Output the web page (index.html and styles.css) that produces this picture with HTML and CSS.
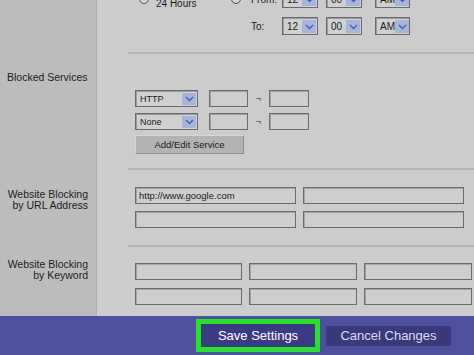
FILE: index.html
```html
<!DOCTYPE html>
<html>
<head>
<meta charset="utf-8">
<link rel="stylesheet" href="styles.css">
</head>
<body>
<div class="page">
  <section class="sec sec-time">
    <div class="lbl"></div>
    <div class="body">
      <div class="time-grid">
        <span class="radio"></span>
        <span class="t24">24 Hours</span>
        <span class="radio"></span>
        <span class="tlbl">From:</span>
        <span class="sel s12"><span class="v">12</span><span class="arr"><svg width="9" height="6" viewBox="0 0 9 6"><path d="M1 1 L4.5 4.5 L8 1" fill="none" stroke="#4562b2" stroke-width="1.4"/></svg></span></span>
        <span class="sel s00"><span class="v">00</span><span class="arr"><svg width="9" height="6" viewBox="0 0 9 6"><path d="M1 1 L4.5 4.5 L8 1" fill="none" stroke="#4562b2" stroke-width="1.4"/></svg></span></span>
        <span class="sel sam"><span class="v">AM</span><span class="arr"><svg width="9" height="6" viewBox="0 0 9 6"><path d="M1 1 L4.5 4.5 L8 1" fill="none" stroke="#4562b2" stroke-width="1.4"/></svg></span></span>
        <span></span><span></span><span></span>
        <span class="tlbl">To:</span>
        <span class="sel s12"><span class="v">12</span><span class="arr"><svg width="9" height="6" viewBox="0 0 9 6"><path d="M1 1 L4.5 4.5 L8 1" fill="none" stroke="#4562b2" stroke-width="1.4"/></svg></span></span>
        <span class="sel s00"><span class="v">00</span><span class="arr"><svg width="9" height="6" viewBox="0 0 9 6"><path d="M1 1 L4.5 4.5 L8 1" fill="none" stroke="#4562b2" stroke-width="1.4"/></svg></span></span>
        <span class="sel sam"><span class="v">AM</span><span class="arr"><svg width="9" height="6" viewBox="0 0 9 6"><path d="M1 1 L4.5 4.5 L8 1" fill="none" stroke="#4562b2" stroke-width="1.4"/></svg></span></span>
      </div>
      <div class="sep"></div>
    </div>
  </section>

  <section class="sec sec-blocked">
    <div class="lbl lbl-blocked">Blocked Services</div>
    <div class="body">
      <div class="brow">
        <span class="sel ssvc"><span class="v">HTTP</span><span class="arr"><svg width="9" height="6" viewBox="0 0 9 6"><path d="M1 1 L4.5 4.5 L8 1" fill="none" stroke="#4562b2" stroke-width="1.4"/></svg></span></span>
        <span class="inp port1"></span>
        <span class="neg">¬</span>
        <span class="inp port2"></span>
      </div>
      <div class="brow">
        <span class="sel ssvc"><span class="v">None</span><span class="arr"><svg width="9" height="6" viewBox="0 0 9 6"><path d="M1 1 L4.5 4.5 L8 1" fill="none" stroke="#4562b2" stroke-width="1.4"/></svg></span></span>
        <span class="inp port1"></span>
        <span class="neg">¬</span>
        <span class="inp port2"></span>
      </div>
      <div class="btn">Add/Edit Service</div>
      <div class="sep"></div>
    </div>
  </section>

  <section class="sec sec-url">
    <div class="lbl lbl-url">Website Blocking<br>by URL Address</div>
    <div class="body">
      <div class="url-grid">
        <span class="inp">http://www.google.com</span>
        <span class="inp"></span>
        <span class="inp"></span>
        <span class="inp"></span>
      </div>
      <div class="sep"></div>
    </div>
  </section>

  <section class="sec sec-kw">
    <div class="lbl lbl-kw">Website Blocking<br>by Keyword</div>
    <div class="body">
      <div class="kw-grid">
        <span class="inp"></span>
        <span class="inp"></span>
        <span class="inp"></span>
        <span class="inp"></span>
        <span class="inp"></span>
        <span class="inp"></span>
      </div>
    </div>
  </section>

  <footer class="foot">
    <div class="save">Save Settings</div>
    <div class="cancel">Cancel Changes</div>
  </footer>
</div>
</body>
</html>
```

FILE: styles.css
```css
* { box-sizing: border-box; margin: 0; padding: 0; }
html, body { width: 474px; height: 355px; overflow: hidden; }
body {
  font-family: "Liberation Sans", Arial, sans-serif;
  color: #1c1c1c;
  background: #cccccc;
}
.page { display: flex; flex-direction: column; height: 355px; }

.sec { display: grid; grid-template-columns: 97px 1fr; }
.sec-time { height: 54px; }
.sec-blocked { height: 116px; }
.sec-url { height: 77px; }
.sec-kw { height: 69px; }

.lbl {
  background: #bcbcbc;
  border-right: 1px solid #b0b0b0;
  font-size: 10.5px;
  line-height: 11px;
  text-align: right;
  padding-right: 8px;
}
.lbl-blocked { text-align: left; padding-left: 7px; padding-top: 17px; line-height: 12px; }
.lbl-url { padding-top: 19px; }
.lbl-kw { padding-top: 12px; }

.body { display: flex; flex-direction: column; padding-left: 38px; }
.sep { margin-top: auto; margin-left: -7px; height: 2px; background: #b4b4b4; }

/* time block */
.time-grid {
  margin-top: -10px;
  margin-left: 4px;
  display: grid;
  grid-template-columns: 10px 82px 10px 41px 44px 49px 36px;
  grid-template-rows: 18px 18px;
  row-gap: 9px;
  align-items: center;
  font-size: 10px;
}
.radio {
  width: 10px; height: 10px;
  border: 1px solid #4e4e4e;
  border-radius: 50%;
  background: #d4d4d4;
}
.t24 { align-self: start; padding-top: 8px; padding-left: 7px; line-height: 12px; }
.tlbl { padding-left: 10px; }

/* select */
.sel {
  display: flex;
  align-items: center;
  height: 18px;
  border: 1px solid #6a6a6a;
  box-shadow: inset 1px 1px 0 #9c9c9c;
  background: #d0d0d0;
  padding: 2px 1px 1px 2px;
  font-size: 10px;
}
.sel .v { flex: 1; padding-left: 2px; line-height: 12px; white-space: nowrap; }
.sel .arr {
  width: 14px;
  flex: none;
  align-self: stretch;
  background: #a7b5de;
  display: flex;
  align-items: center;
  justify-content: center;
}
.s12 { width: 36px; }
.s00 { width: 36px; }
.sam { width: 35px; }

/* blocked services */
.sec-blocked .body { padding-top: 36px; }
.brow { display: flex; align-items: center; height: 17px; }
.brow + .brow { margin-top: 6px; }
.ssvc { width: 63px; height: 17px; font-size: 9px; }
.port1 { margin-left: 11px; width: 39px; }
.port2 { width: 40px; }
.neg { width: 21px; text-align: center; font-size: 9px; line-height: 10px; padding-top: 1px; }
.btn {
  margin-top: 5px;
  width: 109px;
  height: 19px;
  background: #b3b3b3;
  border: 1px solid;
  border-color: #d6d6d6 #8c8c8c #8c8c8c #d6d6d6;
  font-size: 9.5px;
  display: flex;
  align-items: center;
  justify-content: center;
}

/* inputs */
.inp {
  height: 17px;
  border: 1px solid #6c6c6c;
  box-shadow: inset 1px 1px 0 #a4a4a4;
  background: #cecece;
  font-size: 9.5px;
  padding-left: 3px;
  display: flex;
  align-items: center;
}

.sec-url .body { padding-top: 17px; }
.url-grid {
  display: grid;
  grid-template-columns: 161px 161px;
  grid-auto-rows: 17px;
  gap: 7px;
}

.sec-kw .body { padding-top: 16px; }
.kw-grid {
  display: grid;
  grid-template-columns: 107px 108px 108px;
  grid-auto-rows: 17px;
  column-gap: 7px;
  row-gap: 8px;
}

/* footer */
.foot {
  height: 39px;
  background: #4f4f9f;
  display: flex;
  align-items: center;
  padding-left: 196px;
  gap: 6px;
}
.save {
  width: 124px;
  height: 33px;
  border: 5px solid #22e622;
  background: #3b3b85;
  color: #ffffff;
  font-size: 13px;
  display: flex;
  align-items: center;
  justify-content: center;
}
.cancel {
  width: 125px;
  height: 20px;
  background: #39397c;
  color: #dcdcee;
  font-size: 13px;
  display: flex;
  align-items: center;
  justify-content: center;
}
```
